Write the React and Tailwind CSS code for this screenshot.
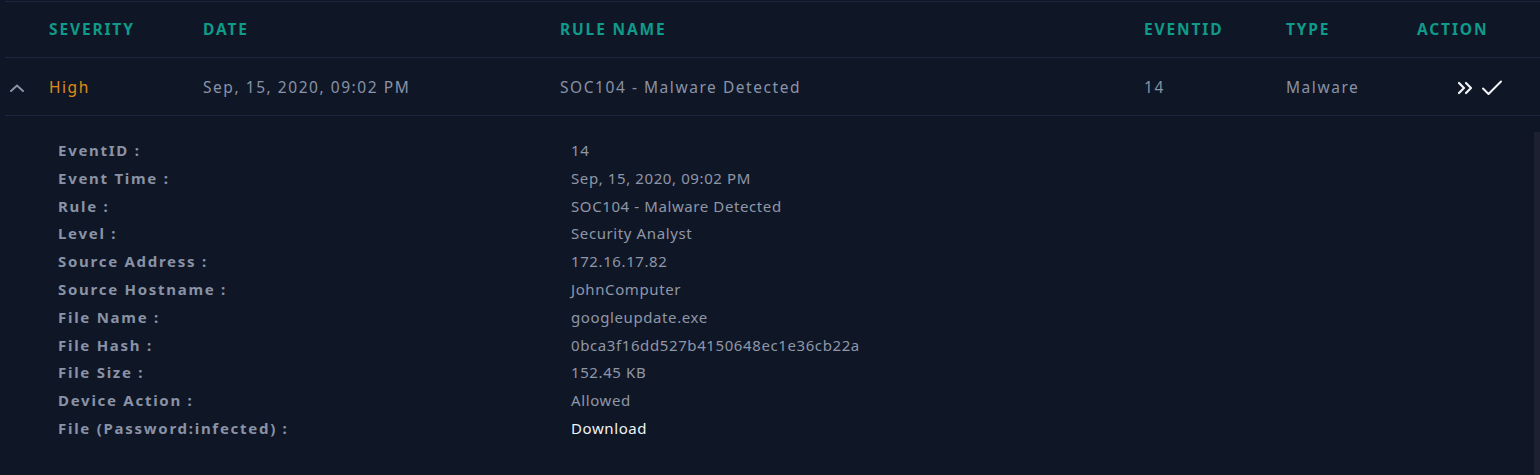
import React from 'react';

const cols = 'grid grid-cols-[44px_154px_357px_584px_142px_131px_1fr] items-center';

const details = [
  ['EventID :', '14'],
  ['Event Time :', 'Sep, 15, 2020, 09:02 PM'],
  ['Rule :', 'SOC104 - Malware Detected'],
  ['Level :', 'Security Analyst'],
  ['Source Address :', '172.16.17.82'],
  ['Source Hostname :', 'JohnComputer'],
  ['File Name :', 'googleupdate.exe'],
  ['File Hash :', '0bca3f16dd527b4150648ec1e36cb22a'],
  ['File Size :', '152.45 KB'],
  ['Device Action :', 'Allowed'],
];

export default function App() {
  return (
    <div
      className="w-[1540px] h-[475px] overflow-hidden bg-[#0f1726] flex flex-col"
      style={{ fontFamily: '"Noto Sans", "DejaVu Sans", sans-serif' }}
    >
      <div className="ml-[5px] mt-px border-t border-[#1c2543]" />
      {/* header row */}
      <div className={`${cols} ml-[5px] h-[56px] border-b border-[#1c2543] text-[15.5px] font-bold tracking-[0.12em] text-[#0f9a89] uppercase`}>
        <div />
        <div>Severity</div>
        <div>Date</div>
        <div>Rule Name</div>
        <div>EventID</div>
        <div>Type</div>
        <div>Action</div>
      </div>
      {/* data row */}
      <div className={`${cols} ml-[5px] h-[58px] pt-[2px] border-b border-[#1c2543] text-[15.5px] tracking-[0.1em] text-[#8a92a6]`}>
        <div className="pl-[4px]">
          <svg width="16" height="10" viewBox="0 0 16 10" fill="none" stroke="#8a93a8" strokeWidth="2" strokeLinecap="round">
            <path d="M2 8 L8 2.5 L14 8" />
          </svg>
        </div>
        <div className="text-[#e08a16]">High</div>
        <div>Sep, 15, 2020, 09:02 PM</div>
        <div>SOC104 - Malware Detected</div>
        <div>14</div>
        <div>Malware</div>
        <div className="flex items-center gap-[7px] pl-[40px]">
          <svg width="17" height="14" viewBox="0 0 17 14" fill="none" stroke="#f1f3f6" strokeWidth="2.2" strokeLinecap="round" strokeLinejoin="round">
            <path d="M2 2 L7 7 L2 12" />
            <path d="M9 2 L14 7 L9 12" />
          </svg>
          <svg width="22" height="16" viewBox="0 0 22 16" fill="none" stroke="#f1f3f6" strokeWidth="2" strokeLinecap="round" strokeLinejoin="round">
            <path d="M2 8.5 L7.5 14 L20 1.5" />
          </svg>
        </div>
      </div>
      {/* detail pane */}
      <div className="flex flex-1">
        <div className="flex-1 pt-[21px] pl-[58px] text-[15px] leading-[27.8px]">
          {details.map(([k, v]) => (
            <div key={k} className="grid grid-cols-[513px_1fr]">
              <div className="font-bold tracking-[0.115em] text-[#8a92a6]">{k}</div>
              <div className="tracking-[0.6px] text-[#8f96a8]">{v}</div>
            </div>
          ))}
          <div className="grid grid-cols-[513px_1fr]">
            <div className="font-bold tracking-[0.115em] text-[#8a92a6]">File (Password:infected) :</div>
            <div className="tracking-[0.6px] text-[#f1f3f6]">Download</div>
          </div>
        </div>
        <div className="w-[6px] mt-[16px] bg-[#1c2030]" />
      </div>
    </div>
  );
}
